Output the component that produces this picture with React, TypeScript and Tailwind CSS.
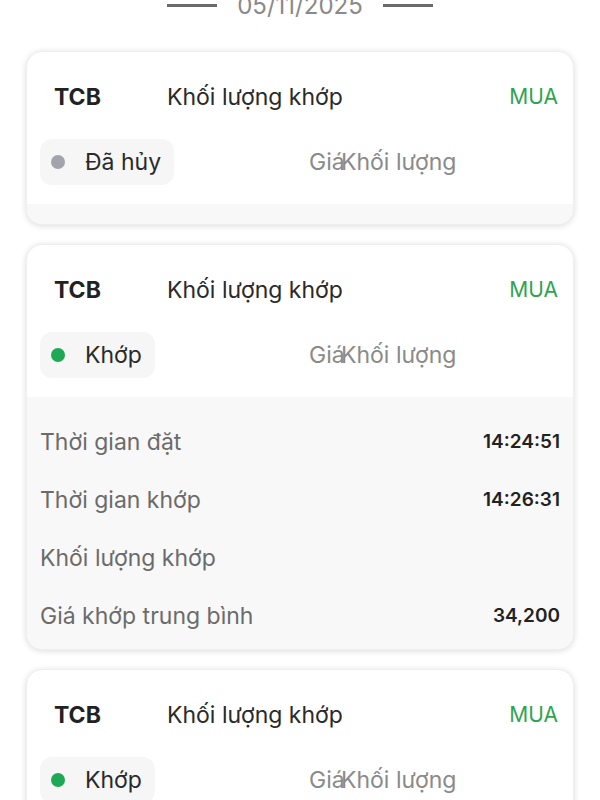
import React from "react";

type Row = { label: string; value: string };
type Card = { status: string; dot: string; rows: Row[] };

const cards: Card[] = [
  { status: "Đã hủy", dot: "bg-[#a3a3ab]", rows: [] },
  {
    status: "Khớp",
    dot: "bg-[#1fa855]",
    rows: [
      { label: "Thời gian đặt", value: "14:24:51" },
      { label: "Thời gian khớp", value: "14:26:31" },
      { label: "Khối lượng khớp", value: "" },
      { label: "Giá khớp trung bình", value: "34,200" },
    ],
  },
  { status: "Khớp", dot: "bg-[#1fa855]", rows: [] },
];

function OrderCard({ c }: { c: Card }) {
  return (
    <div className="rounded-[16px] bg-white shadow-[0_1px_6px_rgba(0,0,0,0.14)] overflow-hidden border border-[#efefef]">
      <div className="px-[13px] pt-[28px] pb-[19px]">
        <div className="flex items-center h-[34px] pl-[14px] pr-[2px]">
          <span className="w-[113px] font-bold text-[23px] text-[#222]">TCB</span>
          <span className="flex-1 text-[23px] text-[#2a2a2a]">Khối lượng khớp</span>
          <span className="text-[21px] text-[#2ea44f]">MUA</span>
        </div>
        <div className="flex items-center mt-[25px]">
          <div className="w-[269px]">
            <div className="inline-flex items-center h-[46px] rounded-[12px] bg-[#f6f6f7] pl-[11px] pr-[13px]">
              <span className={`w-[14px] h-[14px] rounded-full ${c.dot}`} />
              <span className="ml-[20px] text-[23px] text-[#2a2a2a]">{c.status}</span>
            </div>
          </div>
          <span className="w-[32px] text-[23px] text-[#8a8a8a] whitespace-nowrap">Giá</span>
          <span className="text-[23px] text-[#8a8a8a]">Khối lượng</span>
        </div>
      </div>
      <div className="bg-[#f8f8f8] px-[13px] pt-[16px] pb-[4px]">
        {c.rows.map((r) => (
          <div key={r.label} className="flex items-center justify-between h-[58px]">
            <span className="text-[23px] text-[#6b6b6b]">{r.label}</span>
            <span className="text-[19px] font-semibold text-[#222]">{r.value}</span>
          </div>
        ))}
      </div>
    </div>
  );
}

export default function App() {
  return (
    <div className="w-[600px] h-[800px] overflow-hidden bg-white" style={{ fontFamily: "Inter, 'Noto Sans', sans-serif" }}>
      <div className="flex items-center justify-center gap-[20px] -mt-[12px] h-[36px]">
        <div className="w-[50px] h-[3px] bg-[#6b6b6b] mt-[-2px]" />
        <span className="text-[24px] text-[#8a8a8a]">05/11/2025</span>
        <div className="w-[50px] h-[3px] bg-[#6b6b6b] mt-[-2px]" />
      </div>
      <div className="flex flex-col gap-[19px] px-[26px] mt-[27px]">
        {cards.map((c, i) => (
          <OrderCard key={i} c={c} />
        ))}
      </div>
    </div>
  );
}
